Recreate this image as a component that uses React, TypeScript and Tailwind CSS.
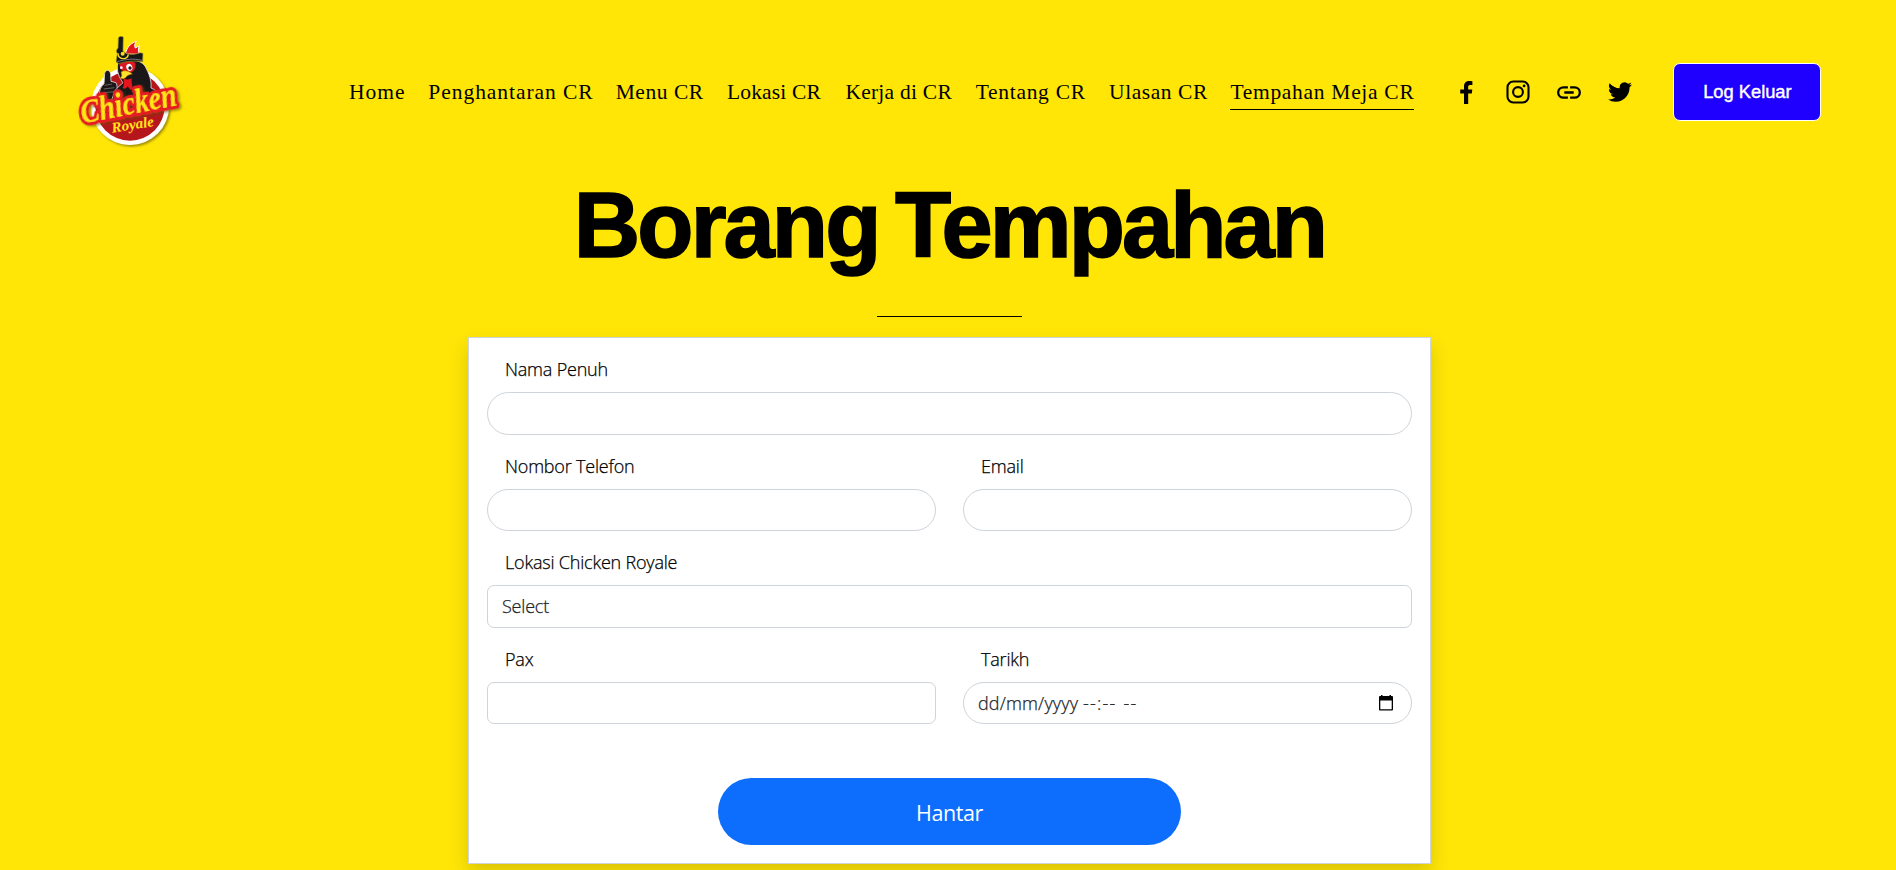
import type { ReactNode } from "react";

const navItems = [
  { label: "Home", box: "w-[56px] tracking-[1px]" },
  { label: "Penghantaran CR", box: "w-[164px] tracking-[0.95px]" },
  { label: "Menu CR", box: "w-[88px] tracking-[0.55px]" },
  { label: "Lokasi CR", box: "w-[95px] tracking-[0.15px]" },
  { label: "Kerja di CR", box: "w-[107px] tracking-[0.25px]" },
  { label: "Tentang CR", box: "w-[110px] tracking-[0.7px]" },
  { label: "Ulasan CR", box: "w-[98px] tracking-[0.55px]" },
  { label: "Tempahan Meja CR", box: "w-[184px] tracking-[0.7px]", active: true },
];

function Logo() {
  return (
    <svg viewBox="0 0 420 420" className="size-[140px] shrink-0" aria-label="Chicken Royale">
      <defs>
        <filter id="soft" x="-20%" y="-20%" width="150%" height="150%">
          <feDropShadow dx="5" dy="5" stdDeviation="3" floodColor="#5a5000" floodOpacity="0.6" />
        </filter>
      </defs>
      <g filter="url(#soft)">
        <circle cx="210" cy="258" r="117" fill="#fff" />
        <circle cx="210" cy="258" r="104" fill="#b5141c" />
      </g>
      <path d="M196 102C200 84 210 70 229 64c-6 9-6 15-3 20l12-7c-4 10-3 17 0 26z" fill="#e3161d" stroke="#fff" strokeWidth="3" />
      <path d="M119 240c-3-20 0-38 13-48l2-32c3-14 18-10 18 4l1 20 15 4c6 10 4 40-2 56l-14 22z" fill="#1b1718" stroke="#ddd" strokeWidth="2.5" />
      <path d="M134 196l22-4M131 207l32-4M132 218l32-3" stroke="#8b8788" strokeWidth="2" />
      <path d="M173 130c20-14 66-16 82 8 13 24 20 44 18 66 20 8 26 20 28 34l-60 34-86 8c-6-20 0-44 6-56 0-14 16-24 28-36-12-16-20-34-16-58z" fill="#1b1718" stroke="#e8e0e0" strokeWidth="2.5" />
      <path d="M178 132c16-8 34-10 48-4 3 16-4 29-18 30-16 2-28-8-30-26z" fill="#dc1720" />
      <ellipse cx="208" cy="142" rx="9" ry="11" fill="#fff" transform="rotate(-20 208 142)" />
      <circle cx="210" cy="144" r="5" fill="#171717" />
      <circle cx="184" cy="143" r="4" fill="#fff" />
      <path d="M183 156c12-7 22-3 34 6-9 3-14 3-18 8-4 7-12 8-19 4 6-3 6-9 3-18z" fill="#ffe22b" stroke="#a66a00" strokeWidth="1.5" />
      <path d="M190 176c10 3 18 3 25-1-2 13 5 22-1 35-5-2-8-6-11-12-4 8-9 10-15 6 5-11 5-17 2-28z" fill="#e3161d" />
      <path d="M175 53c5-5 11-5 15-1l-1 41c9 11 30 13 51 5l9 2-1 25c-24-3-47-2-72 6l-8-6 4-25c-5-5-3-11 2-16z" fill="#171717" stroke="#a99e2e" strokeWidth="2" />
      <path d="M174 100c0 20 28 21 31 3" fill="none" stroke="#f8dd20" strokeWidth="4" />
      <circle cx="188" cy="101" r="6" fill="#f8dd20" />
      <path d="M170 126c25-9 52-11 76-5" fill="none" stroke="#77737a" strokeWidth="3" />
      <g transform="translate(68 311) rotate(-11)" filter="url(#soft)">
        <text
          textLength="292"
          lengthAdjust="spacingAndGlyphs"
          className="[font-family:'Liberation_Serif',serif] text-[98px] font-bold italic"
          fill="#ffe719"
          stroke="#e51d23"
          strokeWidth="20"
          strokeLinejoin="round"
          paintOrder="stroke"
        >
          Chicken
        </text>
      </g>
      <g transform="translate(157 338) rotate(-9)">
        <text
          textLength="128"
          lengthAdjust="spacingAndGlyphs"
          className="[font-family:'Liberation_Serif',serif] text-[44px] font-bold italic"
          fill="#ffe719"
          stroke="#c4151c"
          strokeWidth="7"
          strokeLinejoin="round"
          paintOrder="stroke"
        >
          Royale
        </text>
      </g>
    </svg>
  );
}

function SocialIcons() {
  return (
    <div className="flex items-center text-black">
      <svg viewBox="0 0 13 23" className="mr-[33px] h-[23px] w-[13px]" fill="currentColor">
        <path d="M8.2 23V12.5h3.6l.5-4.1H8.2V5.800c0-1.200.4-1.900 2-1.900h2.200V.2C12 .1 10.700 0 9.300 0 6.200 0 4 1.900 4 5.300v3.100H.2v4.100H4V23z" />
      </svg>
      <svg viewBox="0 0 24 24" className="mr-[27px] size-[24px]" fill="none" stroke="currentColor" strokeWidth="2.1">
        <rect x="1.500" y="1.500" width="21" height="21" rx="5.800" />
        <circle cx="12" cy="12" r="4.900" />
        <circle cx="18.100" cy="5.900" r="1.400" fill="currentColor" stroke="none" />
      </svg>
      <svg viewBox="0 0 24 13" className="mr-[27px] h-[13px] w-[24px]" fill="none" stroke="currentColor" strokeWidth="2.300">
        <path d="M10.900 1.300H6.400a5.200 5.200 0 0 0 0 10.400h4.500M13.100 1.300h4.500a5.200 5.200 0 0 1 0 10.400h-4.500M7.300 6.500h9.400" />
      </svg>
      <svg viewBox="0 2 24 20" className="h-[20px] w-[24px]" fill="currentColor">
        <path d="M23.950 4.570a10 10 0 0 1-2.820.770 4.960 4.960 0 0 0 2.160-2.720c-.950.550-2 .950-3.130 1.180a4.920 4.920 0 0 0-8.380 4.480C7.690 8.090 4.070 6.130 1.640 3.160a4.820 4.820 0 0 0-.670 2.480c0 1.710.870 3.210 2.190 4.100a4.900 4.900 0 0 1-2.230-.620v.060a4.920 4.920 0 0 0 3.950 4.830 5 5 0 0 1-2.210.080 4.940 4.940 0 0 0 4.600 3.420A9.870 9.870 0 0 1 0 19.540a13.990 13.990 0 0 0 7.550 2.210c9.050 0 14-7.500 14-13.980 0-.210 0-.420-.020-.630a9.940 9.940 0 0 0 2.460-2.550z" />
      </svg>
    </div>
  );
}

function Field({ label, rounded = "rounded-full", children }: { label: string; rounded?: string; children?: ReactNode }) {
  return (
    <div className="flex h-[96.6px] min-w-0 flex-1 flex-col">
      <label className="h-[54px] pt-[18px] pl-[18px] text-[18px] leading-[27px] tracking-[-0.2px] text-black">{label}</label>
      <div className={`flex h-[42.6px] items-center border border-[#ced4da] bg-white pr-[18px] pl-[14px] text-[18px] text-[#212529] ${rounded}`}>
        {children}
      </div>
    </div>
  );
}

export default function App() {
  return (
    <div className="h-[870px] w-full overflow-hidden bg-[#ffe607]">
      <header className="flex h-[180px] items-start pl-[60px]">
        <div className="pt-[20px]">
          <Logo />
        </div>
        <div className="flex h-[184px] flex-1 items-center">
          <nav className="ml-[149px] flex gap-[23.35px] [font-family:'Liberation_Serif',serif] text-[21.5px] leading-[26px] text-black">
            {navItems.map((item) => (
              <a key={item.label} className={`${item.box} h-[36px] shrink-0 pt-[5px] whitespace-nowrap ${item.active ? "border-b border-black" : ""}`}>
                {item.label}
              </a>
            ))}
          </nav>
          <div className="ml-[46px] shrink-0">
            <SocialIcons />
          </div>
          <button className="ml-[41px] h-[58px] w-[148px] shrink-0 rounded-[7px] border border-white bg-[#1f00ff] [font-family:'Liberation_Sans',sans-serif] text-[18.3px] text-white [-webkit-text-stroke:0.4px_white]">
            Log Keluar
          </button>
        </div>
      </header>
      <main className="flex flex-col items-center pl-[3px] [font-family:'Open_Sans',sans-serif] font-light">
        <h1 className="h-[136px] [font-family:'Liberation_Sans',sans-serif] text-[92px] leading-[90px] font-bold tracking-[-2.9px] [word-spacing:-6px] whitespace-nowrap text-black [-webkit-text-stroke:1.6px_black]">
          Borang Tempahan
        </h1>
        <hr className="w-[145px] border-t border-black" />
        <form className="mt-[20px] h-[527px] w-[963px] border border-[#ced4da] bg-white px-[18px] shadow-[0_9px_18px_rgba(0,0,0,0.15)] [-webkit-text-stroke:0.25px]">
          <Field label="Nama Penuh" />
          <div className="flex gap-[27px]">
            <Field label="Nombor Telefon" />
            <Field label="Email" />
          </div>
          <Field label="Lokasi Chicken Royale" rounded="rounded-[7px]">
            <span className="tracking-[-0.2px]">Select</span>
          </Field>
          <div className="flex gap-[27px]">
            <Field label="Pax" rounded="rounded-[7px]" />
            <Field label="Tarikh">
              <span className="tracking-[0.15px]">dd/mm/yyyy</span>
              <span className="ml-[5px] tracking-[1.2px]">--:--</span>
              <span className="ml-[7px] flex-1 tracking-[1.2px]">--</span>
              <svg viewBox="0 0 14 16" className="mb-[1px] h-[16px] w-[14px]" fill="#000">
                <path d="M2 0h1.500v1h7V0H12v1h1a1 1 0 0 1 1 1v12.500a1 1 0 0 1-1 1H1a1 1 0 0 1-1-1V2a1 1 0 0 1 1-1h1zM1.300 5.500V14.200h11.400V5.500z" />
              </svg>
            </Field>
          </div>
          <div className="flex justify-center pt-[53.6px]">
            <button type="button" className="h-[67px] w-[463px] rounded-full bg-[#0d6efd] pt-[3px] text-[21.5px] font-normal tracking-[-0.4px] text-white [-webkit-text-stroke:0]">
              Hantar
            </button>
          </div>
        </form>
      </main>
    </div>
  );
}
